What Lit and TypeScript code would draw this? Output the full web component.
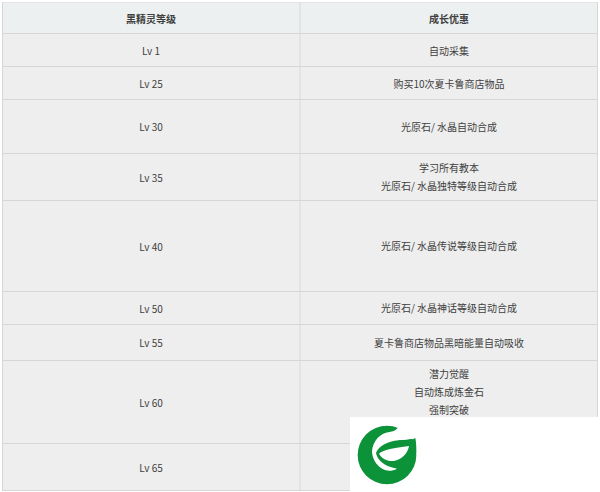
import { LitElement, html, css, svg } from "lit";
import { customElement } from "lit/decorators.js";

const rows: [string, string[], number][] = [
  ["Lv 1", ["自动采集"], 33],
  ["Lv 25", ["购买10次夏卡鲁商店物品"], 33],
  ["Lv 30", ["光原石/ 水晶自动合成"], 54],
  ["Lv 35", ["学习所有教本", "光原石/ 水晶独特等级自动合成"], 47],
  ["Lv 40", ["光原石/ 水晶传说等级自动合成"], 91],
  ["Lv 50", ["光原石/ 水晶神话等级自动合成"], 33],
  ["Lv 55", ["夏卡鲁商店物品黑暗能量自动吸收"], 36],
  ["Lv 60", ["潜力觉醒", "自动炼成炼金石", "强制突破", ""], 83],
  ["Lv 65", [""], 47],
];

@customElement("app-root")
export class AppRoot extends LitElement {
  static styles = css`
    :host {
      display: block;
      position: relative;
      width: 600px;
      height: 492px;
      overflow: hidden;
      background: #fff;
      font-family: "Noto Sans CJK SC", "Noto Sans", sans-serif;
      font-size: 10px;
      color: #3f3f3f;
    }
    .table {
      margin: 2px 0 0 2px;
      width: 596px;
      border: 1px solid #d6d6d6;
      border-bottom: 0;
      border-top-color: #e4e4e4;
      box-sizing: border-box;
      background: #eee;
    }
    .row {
      display: grid;
      grid-template-columns: 296px 1fr;
      border-bottom: 1px solid #d6d6d6;
      box-sizing: border-box;
    }
    .head {
      background: #ecf0f1;
      height: 31px;
      font-weight: 700;
    }
    .cell {
      display: flex;
      flex-direction: column;
      align-items: center;
      justify-content: center;
      line-height: 18px;
      text-align: center;
      box-sizing: border-box;
    }
    .cell:first-child,
    .row:nth-child(-n + 3) .cell {
      padding-top: 1px;
    }
    .line {
      min-height: 18px;
    }
    .line:empty {
      min-height: 21px;
    }
    .cell + .cell {
      border-left: 2px solid #e3e3e3;
    }
    .logo {
      position: absolute;
      left: 350px;
      top: 417px;
      width: 250px;
      height: 75px;
      background: #fff;
    }
    .logo svg {
      position: absolute;
      left: 2px;
      top: 1px;
      width: 70px;
      height: 70px;
    }
  `;

  render() {
    return html`
      <div class="table">
        <div class="row head">
          <div class="cell">黑精灵等级</div>
          <div class="cell">成长优惠</div>
        </div>
        ${rows.map(
          ([lv, lines, h]) => html`
            <div class="row" style="height:${h}px">
              <div class="cell">${lv}</div>
              <div class="cell">${lines.map((l) => (l ? html`<div class="line">${l}</div>` : html`<div class="line"></div>`))}</div>
            </div>
          `
        )}
      </div>
      <div class="logo">
        <svg viewBox="0 0 210 210">
          ${svg`
            <circle cx="105" cy="111" r="88" fill="#0c9239"/>
            <path fill="#fff" d="M116 41 C126 40 134 36 138 28 L140 10 L210 10 L190 60 C175 65 155 66 140 67 C105 70 80 85 72 105 C76 125 95 145 135 152 C120 160 105 160 92 153 C72 142 60 120 60 100 C62 70 84 43 116 41 Z"/>
            <path fill="#0c9239" d="M190 60 C193 75 193 90 193 105 L170 105 L140 67 C160 66 180 66 190 60 Z"/>
            <path fill="#fff" d="M81 107 C95 95 125 90 171 84 C168 105 150 125 125 129 C105 130 90 122 81 107 Z"/>
          `}
        </svg>
      </div>
    `;
  }
}
